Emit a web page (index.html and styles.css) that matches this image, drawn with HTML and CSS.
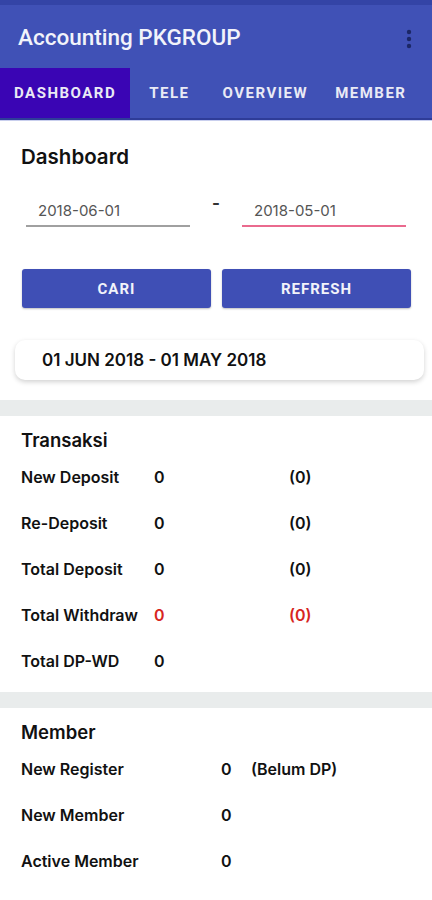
FILE: index.html
```html
<!DOCTYPE html>
<html lang="id">
<head>
    <meta charset="UTF-8">
    <meta name="viewport" content="width=device-width, initial-scale=1.0">
    <title>Accounting PKGROUP</title>
    <link rel="stylesheet" href="styles.css">
</head>
<body>
    <div class="statusbar"></div>
    <header class="appbar">
        <span class="app-title">Accounting PKGROUP</span>
        <svg class="menu-icon" width="6" height="20" viewBox="0 0 6 20">
            <circle cx="3" cy="3" r="2.2"/>
            <circle cx="3" cy="10" r="2.2"/>
            <circle cx="3" cy="17" r="2.2"/>
        </svg>
    </header>
    <nav class="tabs">
        <div class="tab active">DASHBOARD</div>
        <div class="tab">TELE</div>
        <div class="tab">OVERVIEW</div>
        <div class="tab">MEMBER</div>
    </nav>

    <section class="filter">
        <h2>Dashboard</h2>
        <div class="dates">
            <div class="date-field">2018-06-01</div>
            <span class="dash">-</span>
            <div class="date-field focused">2018-05-01</div>
        </div>
        <div class="actions">
            <button>CARI</button>
            <button>REFRESH</button>
        </div>
        <div class="range-card">01 JUN 2018 - 01 MAY 2018</div>
    </section>

    <div class="band"></div>

    <section class="block">
        <h3>Transaksi</h3>
        <div class="row trx">
            <span class="label">New Deposit</span>
            <span class="val">0</span>
            <span>(0)</span>
        </div>
        <div class="row trx">
            <span class="label">Re-Deposit</span>
            <span class="val">0</span>
            <span>(0)</span>
        </div>
        <div class="row trx">
            <span class="label">Total Deposit</span>
            <span class="val">0</span>
            <span>(0)</span>
        </div>
        <div class="row trx red">
            <span class="label">Total Withdraw</span>
            <span class="val">0</span>
            <span>(0)</span>
        </div>
        <div class="row trx">
            <span class="label">Total DP-WD</span>
            <span class="val">0</span>
        </div>
    </section>

    <div class="band band-2"></div>

    <section class="block">
        <h3>Member</h3>
        <div class="row mem">
            <span class="label">New Register</span>
            <span class="val">0</span>
            <span>(Belum DP)</span>
        </div>
        <div class="row mem">
            <span class="label">New Member</span>
            <span class="val">0</span>
        </div>
        <div class="row mem">
            <span class="label">Active Member</span>
            <span class="val">0</span>
        </div>
    </section>
</body>
</html>
```

FILE: styles.css
```css
body {
    margin: 0;
    font-family: Inter, "Liberation Sans", sans-serif;
    background: #fff;
    color: #111;
}
.statusbar {
    height: 5px;
    background-color: #3444a6;
}
.appbar {
    height: 63px;
    display: flex;
    align-items: center;
    justify-content: space-between;
    padding: 0 20px 0 18px;
    background-color: #4051b6;
}
.app-title {
    font-family: Roboto, sans-serif;
    font-weight: 500;
    font-size: 22.5px;
    color: #f2f3fa;
}
.menu-icon {
    fill: #1c2766;
    margin-top: 4px;
}
.tabs {
    display: flex;
    height: 50px;
    gap: 5px;
    background-color: #4051b6;
    border-bottom: 2px solid #2e3c98;
    box-shadow: 0 1px 0 #c9cfee;
}
.tab {
    display: flex;
    align-items: center;
    padding: 0 14px;
    font-family: Roboto, sans-serif;
    font-weight: 700;
    font-size: 15px;
    letter-spacing: 1.5px;
    color: #e9eaf5;
}
.tab:last-child {
    padding-left: 8px;
}
.tab.active {
    background-color: #3a05b4;
}
.filter {
    padding: 25px 21px 20px;
}
h2 {
    margin: 0;
    font-size: 20.5px;
    line-height: 24px;
    font-weight: 600;
}
.dates {
    display: flex;
    align-items: flex-start;
    margin-top: 26px;
    padding: 0 5px;
}
.date-field {
    width: 152px;
    height: 30px;
    padding-left: 12px;
    font-size: 15px;
    line-height: 32px;
    color: #555;
    border-bottom: 2px solid #a0a0a0;
}
.date-field.focused {
    border-bottom-color: #ea6a8e;
}
.dash {
    width: 52px;
    text-align: center;
    font-size: 17px;
    font-weight: 700;
    line-height: 16px;
    color: #333;
}
.actions {
    display: flex;
    gap: 11px;
    margin: 42px 0 0 1px;
}
button {
    width: 189px;
    height: 39px;
    background-color: #3f4fb5;
    color: #f2f3fa;
    border: none;
    border-radius: 3px;
    font-family: Roboto, sans-serif;
    font-weight: 700;
    font-size: 15px;
    letter-spacing: 1px;
    box-shadow: 0 1px 2px rgba(0, 0, 0, 0.25);
}
.range-card {
    margin: 32px -13px 0 -6px;
    height: 40px;
    display: flex;
    align-items: center;
    padding-left: 27px;
    border-radius: 10px;
    font-size: 17px;
    font-weight: 600;
    background: #fff;
    box-shadow: 0 2px 5px rgba(0, 0, 0, 0.18);
}
.band {
    height: 16px;
    background-color: #e9ecec;
}
.band-2 {
    margin-top: 8px;
}
.block {
    padding: 12px 21px 0;
}
h3 {
    margin: 0 0 2px;
    font-size: 18.5px;
    line-height: 24px;
    font-weight: 600;
}
.row {
    display: flex;
    height: 46px;
    align-items: center;
    font-size: 16px;
    font-weight: 600;
}
.trx .label {
    width: 133px;
}
.trx .val {
    width: 135px;
}
.mem .label {
    width: 200px;
}
.mem .val {
    width: 30px;
}
.red .val,
.red span:last-child {
    color: #d7261e;
}
```
